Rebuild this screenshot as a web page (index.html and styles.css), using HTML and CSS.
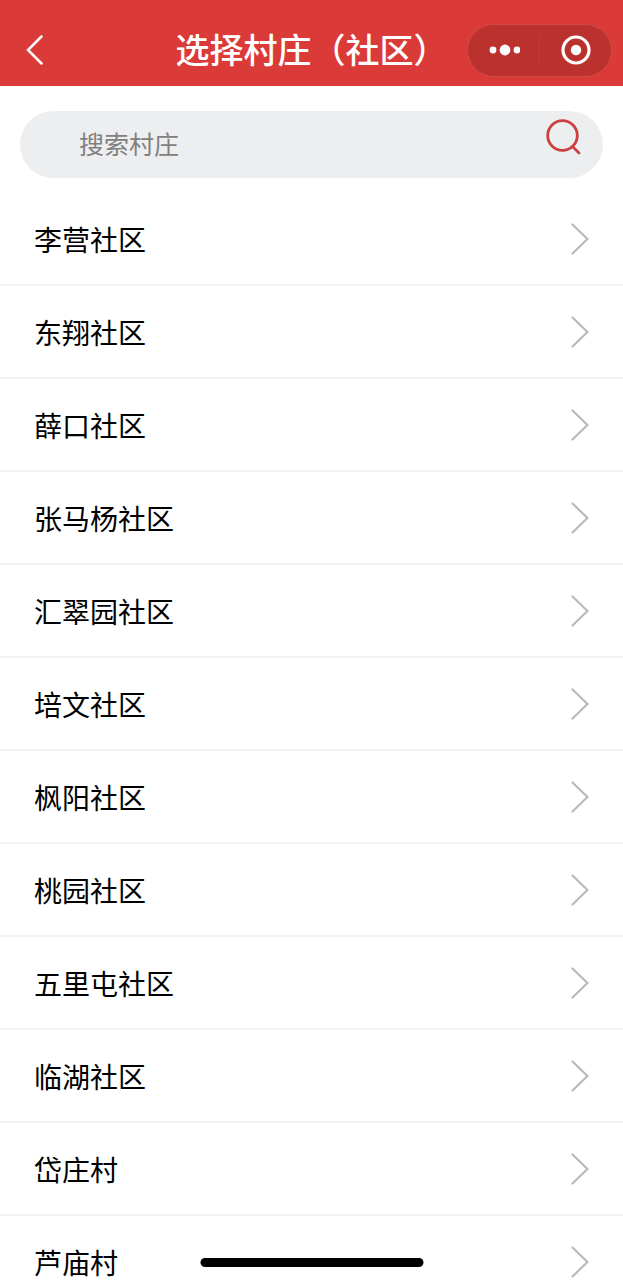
FILE: index.html
```html
<!DOCTYPE html>
<html lang="zh-CN">
<head>
  <meta charset="UTF-8" />
  <meta name="viewport" content="width=device-width, initial-scale=1" />
  <title>选择村庄（社区）</title>
  <link rel="stylesheet" href="styles.css">
</head>
<body>
  <header class="navbar">
    <button class="back-btn" type="button" aria-label="返回">
      <svg viewBox="0 0 18 30" width="18" height="30">
        <path d="M15.500 1.500L2 15L15.500 28.500" />
      </svg>
    </button>
    <h1>选择村庄（社区）</h1>
    <div class="capsule">
      <button type="button" aria-label="更多">
        <svg viewBox="0 0 32 32" width="32" height="32">
          <circle cx="5" cy="16" r="3.400" fill="#fff" />
          <circle cx="17" cy="16" r="5.400" fill="#fff" />
          <circle cx="29" cy="16" r="3.400" fill="#fff" />
        </svg>
      </button>
      <button type="button" aria-label="关闭">
        <svg viewBox="0 0 32 32" width="32" height="32">
          <circle cx="16" cy="16" r="13" fill="none" stroke="#fff" stroke-width="3.200" />
          <circle cx="16" cy="16" r="5.200" fill="#fff" />
        </svg>
      </button>
    </div>
  </header>

  <!-- Search -->
  <form class="search" role="search">
    <input type="text" placeholder="搜索村庄" aria-label="搜索村庄" />
    <button type="submit" aria-label="搜索">
      <svg viewBox="0 0 36 36" width="36" height="36">
        <circle cx="16.500" cy="16.500" r="14.800" />
        <path d="M26.500 27.500L33 34" />
      </svg>
    </button>
  </form>

  <svg class="defs" width="0" height="0" aria-hidden="true">
    <symbol id="arrow" viewBox="0 0 18 32">
      <path d="M1.500 1.500L16.500 16L1.500 30.500" />
    </symbol>
  </svg>

  <!-- Village list -->
  <ul class="village-list">
    <li><a href="#">李营社区<svg class="arrow"><use href="#arrow" /></svg></a></li>
    <li><a href="#">东翔社区<svg class="arrow"><use href="#arrow" /></svg></a></li>
    <li><a href="#">薛口社区<svg class="arrow"><use href="#arrow" /></svg></a></li>
    <li><a href="#">张马杨社区<svg class="arrow"><use href="#arrow" /></svg></a></li>
    <li><a href="#">汇翠园社区<svg class="arrow"><use href="#arrow" /></svg></a></li>
    <li><a href="#">培文社区<svg class="arrow"><use href="#arrow" /></svg></a></li>
    <li><a href="#">枫阳社区<svg class="arrow"><use href="#arrow" /></svg></a></li>
    <li><a href="#">桃园社区<svg class="arrow"><use href="#arrow" /></svg></a></li>
    <li><a href="#">五里屯社区<svg class="arrow"><use href="#arrow" /></svg></a></li>
    <li><a href="#">临湖社区<svg class="arrow"><use href="#arrow" /></svg></a></li>
    <li><a href="#">岱庄村<svg class="arrow"><use href="#arrow" /></svg></a></li>
    <li><a href="#">芦庙村<svg class="arrow"><use href="#arrow" /></svg></a></li>
  </ul>

  <div class="home-indicator"></div>
</body>
</html>
```
FILE: styles.css
```css
* {
  margin: 0;
  padding: 0;
  box-sizing: border-box;
}

body {
  display: flex;
  flex-direction: column;
  height: 100vh;
  font-family: "Noto Sans CJK SC", sans-serif;
  background: #fff;
  color: #000;
}

button {
  border: none;
  background: none;
  cursor: pointer;
}

svg {
  display: block;
}

/* Top bar */
.navbar {
  display: grid;
  grid-template-columns: 1fr auto 1fr;
  align-items: center;
  flex-shrink: 0;
  height: 86px;
  padding: 14px 11px 0;
  background: #db3b38;
  color: #fff;
}

.navbar h1 {
  padding-bottom: 2px;
  font-size: 34px;
  font-weight: 500;
  line-height: 48px;
  white-space: nowrap;
}

.back-btn {
  justify-self: start;
  margin-left: 15px;
}

.back-btn svg {
  fill: none;
  stroke: #fff;
  stroke-width: 2.5;
  stroke-linecap: round;
}

.capsule {
  display: flex;
  align-items: center;
  justify-self: end;
  width: 145px;
  height: 53px;
  margin-left: -40px;
  border: 1px solid #cf4a47;
  border-radius: 27px;
  background: #bb312e;
}

.capsule button {
  display: flex;
  flex: 1;
  justify-content: center;
}

.capsule button + button {
  border-left: 1px solid #c13b37;
}

/* Search box */
.search {
  display: flex;
  flex-shrink: 0;
  height: 67px;
  margin: 25px 20px 15px;
  padding: 0 21px 0 59px;
  border-radius: 34px;
  background: #edeef0;
}

.search input {
  flex: 1;
  min-width: 0;
  padding-bottom: 3px;
  border: none;
  outline: none;
  background: transparent;
  font-family: inherit;
  font-size: 25px;
  color: #000;
}

.search input::placeholder {
  color: #808080;
}

.search button {
  align-self: flex-start;
  padding-top: 8px;
}

.search button svg {
  fill: none;
  stroke: #cb4142;
  stroke-width: 2.8;
  stroke-linecap: round;
}

/* Village list */
.defs {
  position: absolute;
}

.village-list {
  flex: 1;
  min-height: 0;
  overflow-y: auto;
  scrollbar-width: none;
  list-style: none;
}

.village-list a {
  display: flex;
  align-items: center;
  justify-content: space-between;
  height: 93px;
  padding: 0 34px;
  border-bottom: 2px solid #f2f2f2;
  color: inherit;
  font-size: 28px;
  text-decoration: none;
}

.arrow {
  width: 18px;
  height: 32px;
  fill: none;
  stroke: #b9b9b9;
  stroke-width: 2.2;
  stroke-linecap: round;
}

.home-indicator {
  position: fixed;
  bottom: 13px;
  left: 50%;
  width: 223px;
  height: 9px;
  border-radius: 5px;
  background: #000;
  transform: translateX(-50%);
}
```
